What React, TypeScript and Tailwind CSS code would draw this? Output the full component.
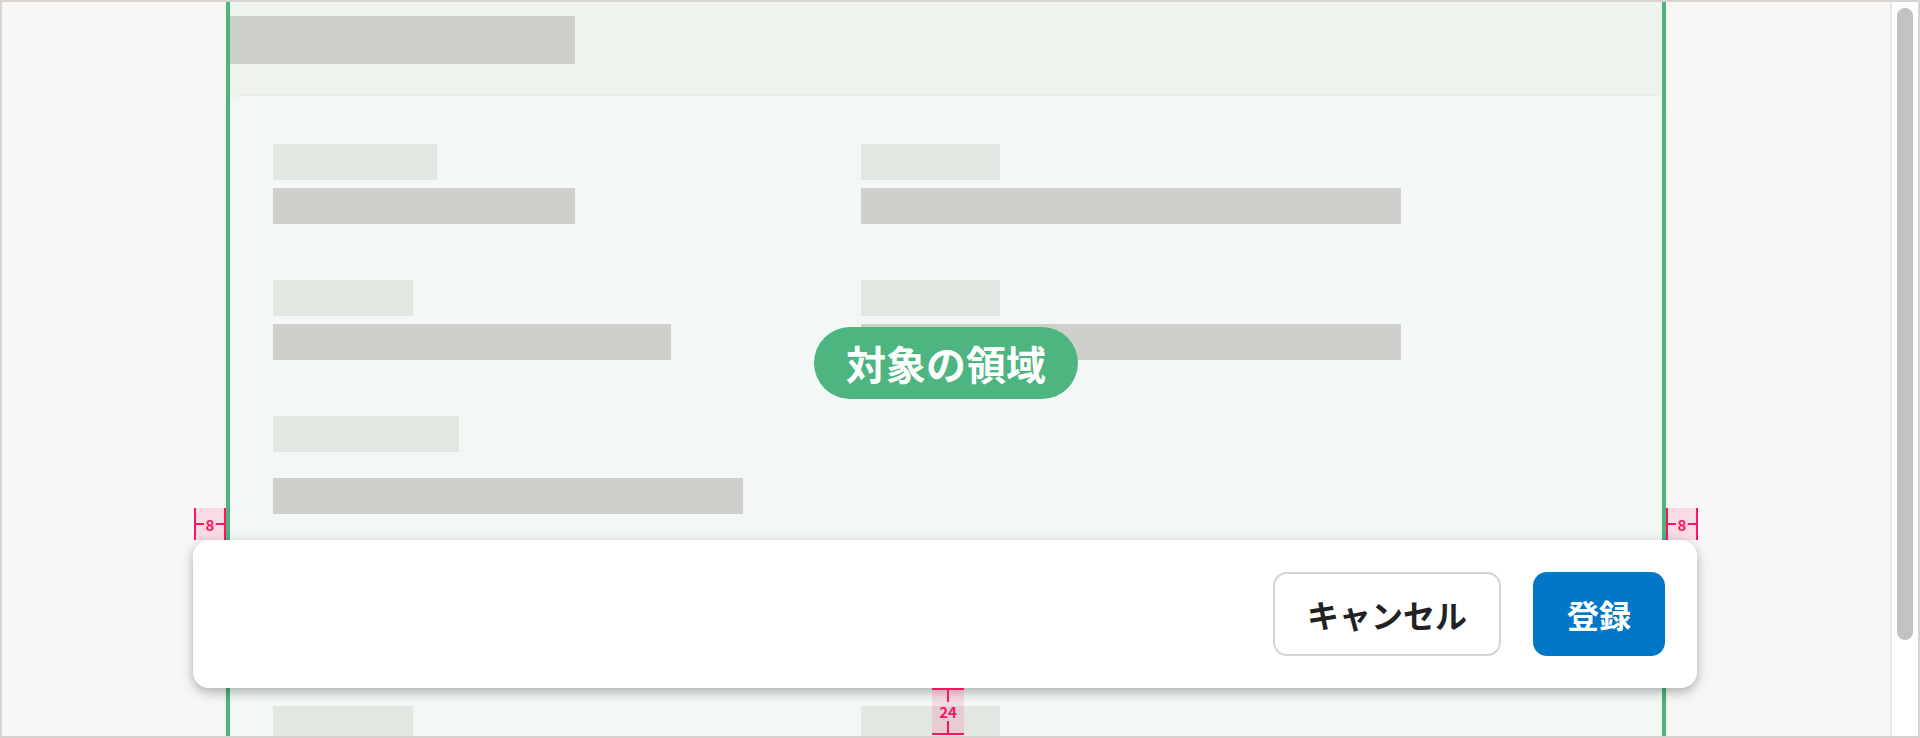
import React from 'react';

interface Field {
  label: number;
  value?: number;
  gap?: number;
}

interface Row {
  left?: Field;
  right?: Field;
  className: string;
}

const rows: Row[] = [
  { left: { label: 164, value: 302 }, right: { label: 139, value: 540 }, className: 'h-[80px]' },
  { left: { label: 140, value: 398 }, right: { label: 139, value: 540 }, className: 'mt-[56px] h-[80px]' },
  { left: { label: 186, value: 470, gap: 26 }, className: 'mt-[56px] h-[98px]' },
  { left: { label: 140 }, right: { label: 139 }, className: 'mt-[192px] h-[80px]' },
];

function FieldBlock({ field }: { field?: Field }) {
  if (!field) return <div />;
  return (
    <div className="flex flex-col">
      <div className="h-9 bg-[#e2e7e1]" style={{ width: field.label }} />
      {field.value && (
        <div className="h-9 bg-[#cfd0cb]" style={{ width: field.value, marginTop: field.gap ?? 8 }} />
      )}
    </div>
  );
}

function SideMarker({ side }: { side: 'left' | 'right' }) {
  return (
    <div
      className={`absolute top-[506px] w-8 h-8 bg-[#f8dbe3] flex items-center ${
        side === 'left' ? 'left-[-32px]' : 'right-[-32px]'
      }`}
    >
      <div className="absolute left-0 top-0 bottom-0 w-[2px] bg-[#ff1464]" />
      <div className="absolute right-0 top-0 bottom-0 w-[2px] bg-[#ff1464]" />
      <div className="flex-1 flex items-center px-[2px]">
        <div className="flex-1 h-[2px] bg-[#ff1464]" />
        <span className="px-[2px] text-[15px] leading-none font-bold text-[#ff1464]">8</span>
        <div className="flex-1 h-[2px] bg-[#ff1464]" />
      </div>
    </div>
  );
}

export default function App() {
  return (
    <div className="w-[1920px] h-[738px] border-2 border-[#d6d3d0] flex overflow-hidden font-['Noto_Sans_CJK_JP',sans-serif]">
      {/* Page */}
      <div className="flex-1 bg-[#f8f7f5] pl-[224px]">
        <div className="relative w-[1440px] h-full flex flex-col">
          {/* Header */}
          <div className="h-[94px] shrink-0 bg-[#eef3ee] pt-[14px]">
            <div className="h-12 w-[349px] bg-[#cfd0cb]" />
          </div>

          {/* Card */}
          <div className="flex-1 rounded-t-2xl bg-[#f3f8f6] shadow-[0_0_4px_rgba(0,0,0,0.07)] pl-[47px] pt-12">
            {rows.map((row, i) => (
              <div key={i} className={`grid grid-cols-[588px_1fr] ${row.className}`}>
                <FieldBlock field={row.left} />
                <FieldBlock field={row.right} />
              </div>
            ))}
          </div>

          {/* Target area outline */}
          <div className="absolute inset-0 border-x-4 border-[#4cb47c] pointer-events-none" />

          {/* Label pill */}
          <div className="absolute top-[325px] left-1/2 -translate-x-1/2 h-[72px] px-8 rounded-full bg-[#4db57f] flex items-center">
            <span className="text-[40px] leading-none font-bold text-white whitespace-nowrap">対象の領域</span>
          </div>

          <SideMarker side="left" />
          <SideMarker side="right" />

          {/* Floating footer */}
          <div className="absolute left-[-33px] right-[-31px] top-[538px] h-[148px] bg-white rounded-2xl shadow-[0_4px_12px_rgba(0,0,0,0.3)] flex items-center justify-end gap-8 pr-8">
            <button className="h-[84px] px-8 rounded-[14px] border-2 border-[#d6d3d0] bg-white text-[32px] font-bold text-[#222222]">
              キャンセル
            </button>
            <button className="h-[84px] w-[132px] rounded-[14px] bg-[#0077c7] text-[32px] font-bold text-white">
              登録
            </button>
          </div>

          {/* Bottom spacing marker */}
          <div className="absolute top-[686px] left-[706px] w-8 h-[47px] bg-[rgba(255,20,100,0.12)] flex flex-col items-center">
            <div className="w-full h-[2px] bg-[#ff1464]" />
            <div className="flex-1 w-[2px] bg-[#ff1464]" />
            <span className="py-[2px] text-[15px] leading-none font-bold text-[#ff1464]">24</span>
            <div className="flex-1 w-[2px] bg-[#ff1464]" />
            <div className="w-full h-[2px] bg-[#ff1464]" />
          </div>
        </div>
      </div>

      {/* Scrollbar */}
      <div className="w-[28px] shrink-0 border-l-2 border-[#e8e8e8] bg-white pt-[6px] pl-[5px]">
        <div className="w-4 h-[632px] rounded-full bg-[#c1c2c1]" />
      </div>
    </div>
  );
}
